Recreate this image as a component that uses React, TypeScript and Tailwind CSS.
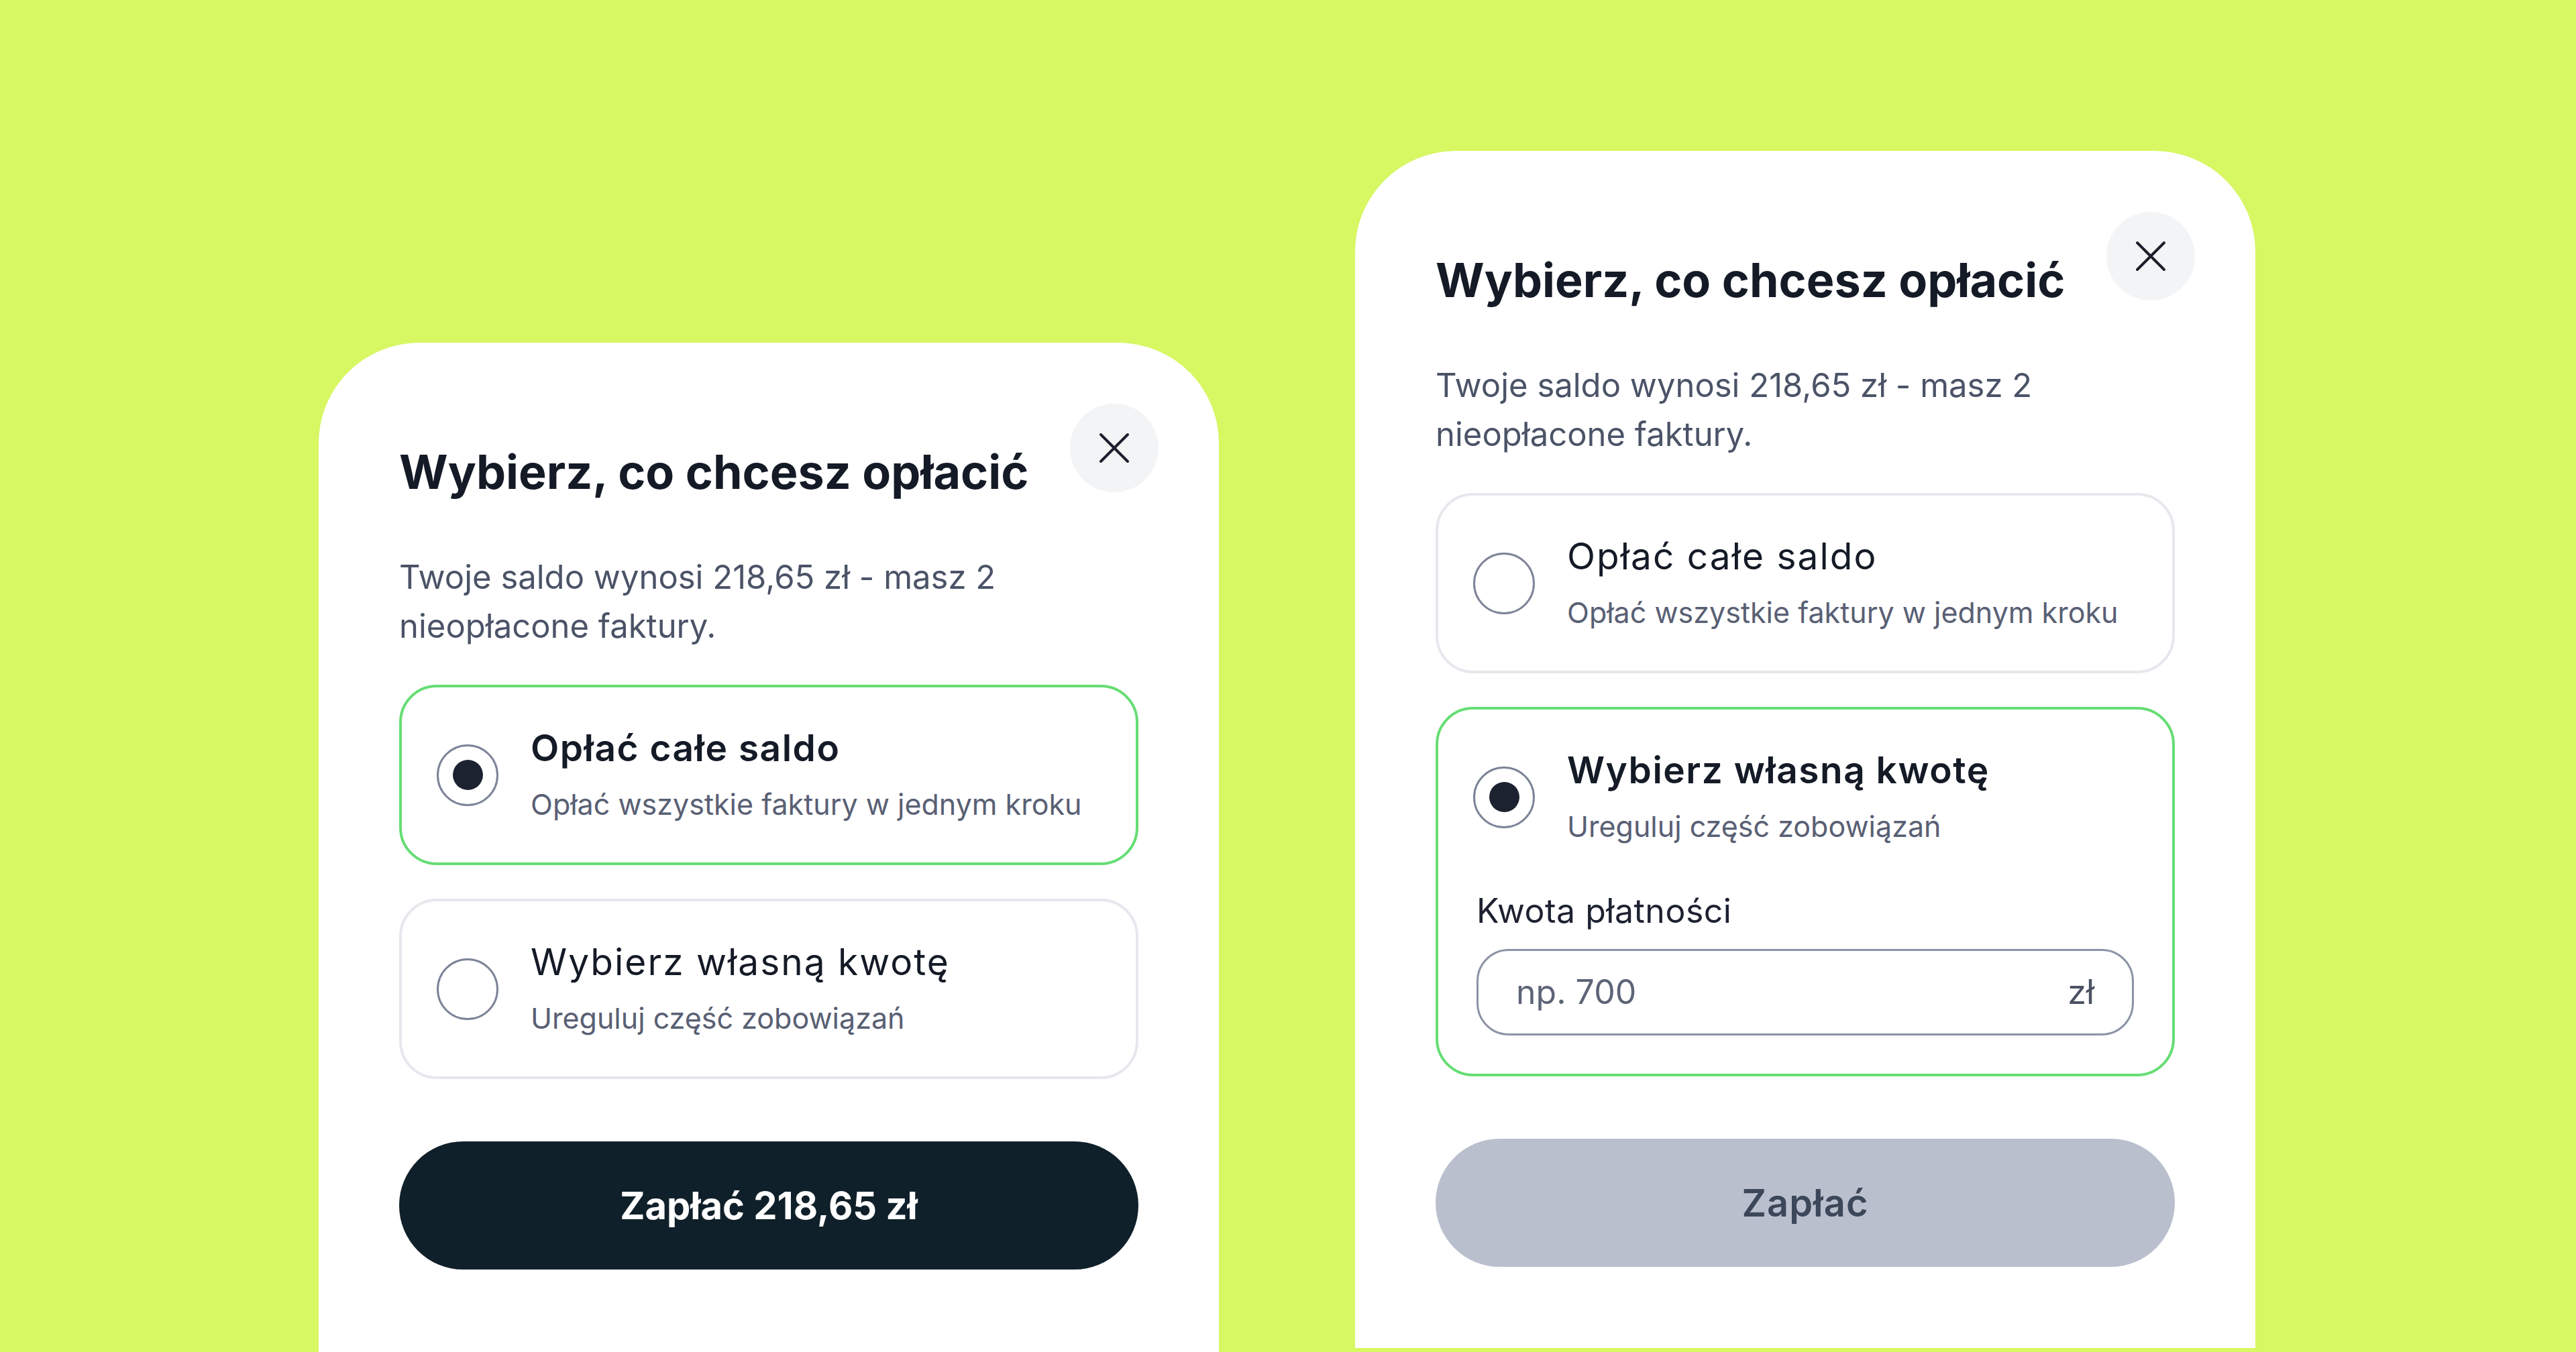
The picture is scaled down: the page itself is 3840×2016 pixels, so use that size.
import React, { useState } from 'react'

type Choice = 'full' | 'custom'

const font = { fontFamily: 'Inter, "Noto Sans", sans-serif' }

const CloseButton: React.FC = () => (
  <button
    className="absolute top-[91px] right-[90px] w-[132px] h-[132px] rounded-full bg-[#f3f4f6] flex items-center justify-center"
    title="Zamknij"
  >
    <svg width="46" height="46" viewBox="0 0 46 46" fill="none">
      <path d="M3 3L43 43M43 3L3 43" stroke="#1a1f2b" strokeWidth="4" strokeLinecap="round" />
    </svg>
  </button>
)

const Radio: React.FC<{ checked: boolean }> = ({ checked }) => (
  <div className="w-[92px] h-[92px] shrink-0 rounded-full border-[3px] border-[#7d8498] flex items-center justify-center">
    {checked && <div className="w-[45px] h-[45px] rounded-full bg-[#1c2230]" />}
  </div>
)

interface OptionProps {
  title: string
  subtitle: string
  checked: boolean
  onSelect: () => void
  children?: React.ReactNode
}

const Option: React.FC<OptionProps> = ({ title, subtitle, checked, onSelect, children }) => (
  <div
    onClick={onSelect}
    className={
      checked
        ? 'border-4 border-[#66dd74] rounded-[56px] px-[52px] pt-[57px] pb-[57px] bg-white cursor-pointer'
        : 'border-4 border-[#e6e8ed] rounded-[56px] px-[52px] pt-[57px] pb-[57px] bg-white cursor-pointer'
    }
  >
    <div className="flex items-center gap-[48px]">
      <Radio checked={checked} />
      <div className="flex flex-col">
        <span
          className={
            checked
              ? 'text-[55px] leading-[66px] tracking-[1.5px] font-semibold text-[#141a26]'
              : 'text-[55px] leading-[66px] tracking-[2px] font-normal text-[#141a26]'
          }
        >
          {title}
        </span>
        <span className="mt-[21px] text-[43px] leading-[60px] text-[#596074]">{subtitle}</span>
      </div>
    </div>
    {children}
  </div>
)

const AmountField: React.FC = () => (
  <div className="mt-[66px] px-[5px]">
    <div className="text-[50px] leading-[60px] tracking-[0.5px] text-[#1d2130]">Kwota płatności</div>
    <div className="mt-[27px] h-[129px] rounded-[48px] border-[3px] border-[#8c93a5] px-[56px] flex items-center justify-between">
      <span className="text-[50px] text-[#5d6477]">np. 700</span>
      <span className="text-[50px] text-[#4b5263]">zł</span>
    </div>
  </div>
)

const PaymentSheet: React.FC<{ initial: Choice; className: string }> = ({ initial, className }) => {
  const [choice, setChoice] = useState<Choice>(initial)

  return (
    <div className={`relative w-[1342px] shrink-0 bg-white rounded-t-[150px] px-[120px] pt-[153px] ${className}`}>
      <CloseButton />

      <h2 className="text-[70px] leading-[80px] font-bold text-[#141a26]">Wybierz, co chcesz opłacić</h2>
      <p className="mt-[80px] text-[49px] leading-[73px] text-[#4b5367]">
        Twoje saldo wynosi 218,65 zł - masz 2
        <br />
        nieopłacone faktury.
      </p>

      <div className="mt-[51px] flex flex-col gap-[50px]">
        <Option
          title="Opłać całe saldo"
          subtitle="Opłać wszystkie faktury w jednym kroku"
          checked={choice === 'full'}
          onSelect={() => setChoice('full')}
        />
        <Option
          title="Wybierz własną kwotę"
          subtitle="Ureguluj część zobowiązań"
          checked={choice === 'custom'}
          onSelect={() => setChoice('custom')}
        >
          {choice === 'custom' && <AmountField />}
        </Option>
      </div>

      {choice === 'full' ? (
        <button className="mt-[93px] w-full h-[191px] rounded-full bg-[#10202a] text-white text-[56px] font-bold">
          Zapłać 218,65 zł
        </button>
      ) : (
        <button className="mt-[93px] w-full h-[191px] rounded-full bg-[#b9bfcd] text-[#3d475a] text-[56px] tracking-[1px] font-semibold" disabled>
          Zapłać
        </button>
      )}
    </div>
  )
}

export default function App() {
  return (
    <div className="w-[3840px] h-[2016px] bg-[#d7f763] overflow-hidden flex items-start pl-[475px] gap-[203px]" style={font}>
      <PaymentSheet initial="full" className="mt-[511px] h-[1600px]" />
      <PaymentSheet initial="custom" className="mt-[225px] h-[1785px]" />
    </div>
  )
}
